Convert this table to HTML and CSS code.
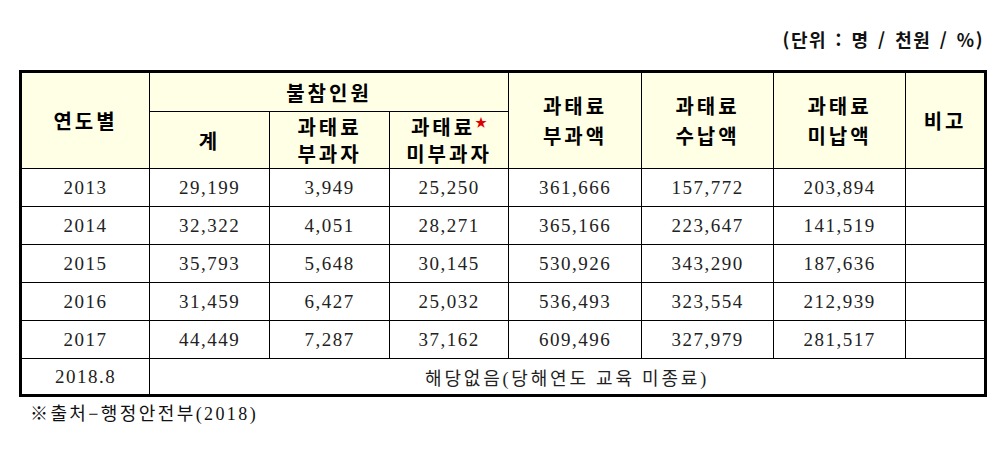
FILE: index.html
```html
<!DOCTYPE html>
<html lang="ko">
<head>
<meta charset="utf-8">
<link rel="stylesheet" href="styles.css">
</head>
<body>
<div class="page">
  <div class="unit">(단위 : 명 / 천원 / %)</div>
  <table class="tbl">
    <colgroup>
      <col class="c1"><col class="c2"><col class="c3"><col class="c4"><col class="c5"><col class="c6"><col class="c7"><col class="c8">
    </colgroup>
    <thead>
      <tr class="h1">
        <th rowspan="2">연도별</th>
        <th colspan="3">불참인원</th>
        <th rowspan="2" class="tall">과태료<br>부과액</th>
        <th rowspan="2" class="tall">과태료<br>수납액</th>
        <th rowspan="2" class="tall">과태료<br>미납액</th>
        <th rowspan="2">비고</th>
      </tr>
      <tr class="h2">
        <th>계</th>
        <th>과태료<br>부과자</th>
        <th>과태료<span class="star">★</span><br>미부과자</th>
      </tr>
    </thead>
    <tbody>
      <tr><td>2013</td><td>29,199</td><td>3,949</td><td>25,250</td><td>361,666</td><td>157,772</td><td>203,894</td><td></td></tr>
      <tr><td>2014</td><td>32,322</td><td>4,051</td><td>28,271</td><td>365,166</td><td>223,647</td><td>141,519</td><td></td></tr>
      <tr><td>2015</td><td>35,793</td><td>5,648</td><td>30,145</td><td>530,926</td><td>343,290</td><td>187,636</td><td></td></tr>
      <tr><td>2016</td><td>31,459</td><td>6,427</td><td>25,032</td><td>536,493</td><td>323,554</td><td>212,939</td><td></td></tr>
      <tr><td>2017</td><td>44,449</td><td>7,287</td><td>37,162</td><td>609,496</td><td>327,979</td><td>281,517</td><td></td></tr>
      <tr class="last"><td>2018.8</td><td colspan="7" class="none">해당없음(당해연도 교육 미종료)</td></tr>
    </tbody>
  </table>
  <div class="source">※출처−행정안전부(2018)</div>
</div>
</body>
</html>
```

FILE: styles.css
```css
html, body {
  margin: 0;
  padding: 0;
  background: #ffffff;
}
.page {
  width: 1003px;
  height: 459px;
  position: relative;
  overflow: hidden;
}
.unit {
  height: 70px;
  box-sizing: border-box;
  padding-top: 28px;
  padding-right: 19px;
  text-align: right;
  font-family: "Noto Sans CJK KR", sans-serif;
  font-weight: bold;
  font-size: 18px;
  line-height: 22px;
  color: #111;
  letter-spacing: 1.5px;
  word-spacing: 2px;
}
.tbl {
  margin-left: 19px;
  width: 968px;
  border-collapse: collapse;
  table-layout: fixed;
  border: 3px solid #000;
}
.c1 { width: 129px; }
.c2 { width: 120px; }
.c3 { width: 120px; }
.c4 { width: 119px; }
.c5 { width: 133px; }
.c6 { width: 132px; }
.c7 { width: 132px; }
.c8 { width: 80px; }
.tbl th, .tbl td {
  border: 1px solid #000;
  padding: 0;
  text-align: center;
  vertical-align: middle;
}
.tbl th {
  background: #ffffe6;
  font-family: "Noto Sans CJK KR", sans-serif;
  font-weight: bold;
  font-size: 20px;
  line-height: 27px;
  letter-spacing: 3px;
  color: #000;
}
.tbl th.tall { line-height: 30px; }
.h1 { height: 40px; }
.h2 { height: 57px; }
.tbl td {
  height: 37px;
  font-family: "Liberation Serif", "Noto Sans CJK KR", serif;
  font-size: 19px;
  letter-spacing: 1.5px;
  color: #222;
}
.tbl tr.last td { height: 35px; }
.tbl td.none {
  font-family: "Liberation Serif", "Noto Sans CJK KR", serif;
  font-size: 18px;
  letter-spacing: 2.8px;
}
.star {
  color: #e00000;
  font-size: 12px;
  line-height: 0;
  vertical-align: 8px;
  letter-spacing: 0;
}
.source {
  padding-left: 30px;
  padding-top: 6px;
  font-family: "Liberation Serif", "Noto Sans CJK KR", serif;
  font-size: 18px;
  line-height: 22px;
  color: #111;
  letter-spacing: 2.4px;
}
```
